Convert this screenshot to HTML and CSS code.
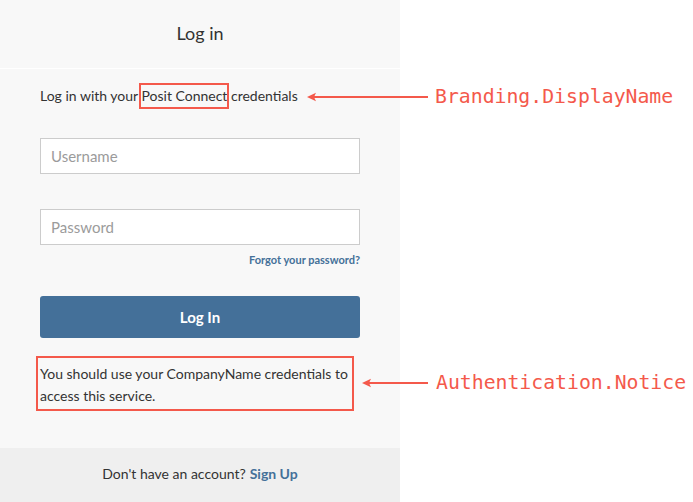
FILE: index.html
```html
<!DOCTYPE html>
<html lang="en">

<head>
    <meta charset="UTF-8" />
    <meta name="viewport" content="width=device-width, initial-scale=1.0" />
    <title>Log in</title>
    <link rel="stylesheet" href="styles.css">
</head>

<body>
    <div class="screen">
        <section class="login-panel">
            <header class="panel-header">
                <h1>Log in</h1>
            </header>

            <main class="panel-body">
                <p class="intro">Log in with your <span class="brand-name">Posit Connect</span> credentials</p>

                <form class="login-form">
                    <input class="field" type="text" placeholder="Username">
                    <input class="field field-password" type="password" placeholder="Password">
                    <a class="forgot" href="#">Forgot your password?</a>
                    <button class="btn-login" type="button">Log In</button>
                </form>

                <div class="notice">You should use your CompanyName credentials to access this service.</div>
            </main>

            <footer class="panel-footer">
                Don't have an account? <a href="#">Sign Up</a>
            </footer>
        </section>

        <!-- annotation callouts drawn over the screenshot -->
        <div class="callout callout-brand">
            <svg class="arrow" width="121" height="10" viewBox="0 0 121 10">
                <line x1="6" y1="5" x2="121" y2="5" />
                <polygon points="0,5 9,0.8 7,5 9,9.2" />
            </svg>
            <span class="callout-label">Branding.DisplayName</span>
        </div>

        <div class="callout callout-notice">
            <svg class="arrow" width="66" height="10" viewBox="0 0 66 10">
                <line x1="6" y1="5" x2="66" y2="5" />
                <polygon points="0,5 9,0.8 7,5 9,9.2" />
            </svg>
            <span class="callout-label">Authentication.Notice</span>
        </div>
    </div>
</body>

</html>
```

FILE: styles.css
```css
* {
    box-sizing: border-box;
}

body {
    margin: 0;
    background: #fff;
    font-family: Lato, "Noto Sans", sans-serif;
    color: #333;
}

.screen {
    position: relative;
    display: flex;
    height: 502px;
    overflow: hidden;
}

.login-panel {
    width: 400px;
    height: 502px;
    background: #f8f8f8;
    display: flex;
    flex-direction: column;
}

.panel-header {
    height: 69px;
    display: flex;
    align-items: center;
    justify-content: center;
    border-bottom: 1px solid #fff;
    padding-bottom: 3px;
}

.panel-header h1 {
    margin: 0;
    font-size: 18px;
    font-weight: 400;
    line-height: 1;
}

.panel-body {
    flex: 1;
    padding: 0 40px;
}

.intro {
    margin: 17px 0 0 0;
    font-size: 14px;
    line-height: 20px;
}

.brand-name {
    position: relative;
}

.brand-name::after {
    content: "";
    position: absolute;
    top: -4px;
    bottom: -5px;
    left: -3px;
    right: -2px;
    border: 2px solid #f4594b;
}

.login-form {
    display: flex;
    flex-direction: column;
    margin-top: 32px;
}

.field {
    height: 36px;
    width: 100%;
    border: 1px solid #ccc;
    background: #fff;
    padding: 0 10px;
    font-family: inherit;
    font-size: 15px;
    color: #333;
    border-radius: 0;
}

.field::placeholder {
    color: #9b9b9b;
}

.field-password {
    margin-top: 35px;
}

.forgot {
    margin-top: 8px;
    align-self: flex-end;
    font-size: 11px;
    line-height: 14px;
    font-weight: 700;
    color: #447099;
    text-decoration: none;
}

.btn-login {
    margin-top: 29px;
    height: 42px;
    border: none;
    border-radius: 3px;
    background: #447099;
    color: #fff;
    font-family: inherit;
    font-size: 15px;
    font-weight: 700;
}

.notice {
    margin: 18px 0 0 -4px;
    width: 318px;
    border: 2px solid #f4594b;
    padding: 5px 4px 2px 2px;
    font-size: 14px;
    line-height: 22px;
}

.panel-footer {
    height: 54px;
    background: #efefef;
    display: flex;
    align-items: center;
    justify-content: center;
    gap: 4px;
    padding-bottom: 4px;
    font-size: 14px;
}

.panel-footer a {
    color: #447099;
    font-weight: 700;
    text-decoration: none;
}

.callout {
    position: absolute;
    display: flex;
    align-items: center;
    gap: 7px;
}

.callout-brand {
    top: 85px;
    left: 307px;
}

.callout-notice {
    top: 371px;
    left: 362px;
    gap: 8px;
}

.arrow line {
    stroke: #f4594b;
    stroke-width: 2;
}

.arrow polygon {
    fill: #f4594b;
}

.callout-label {
    font-family: "DejaVu Sans Mono", monospace;
    font-size: 19.8px;
    line-height: 24px;
    color: #f4594b;
}
```
